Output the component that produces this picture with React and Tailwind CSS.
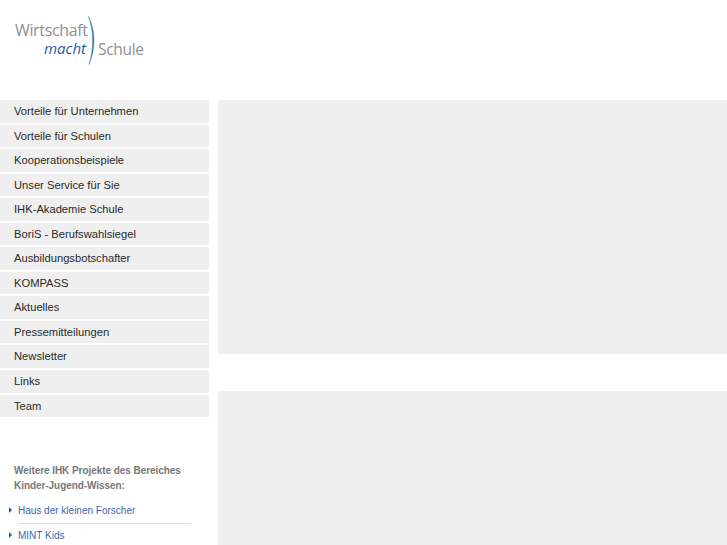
const menu = [
  'Vorteile für Unternehmen',
  'Vorteile für Schulen',
  'Kooperationsbeispiele',
  'Unser Service für Sie',
  'IHK-Akademie Schule',
  'BoriS - Berufswahlsiegel',
  'Ausbildungsbotschafter',
  'KOMPASS',
  'Aktuelles',
  'Pressemitteilungen',
  'Newsletter',
  'Links',
  'Team',
];

function Logo() {
  return (
    <div className="flex items-end w-[130px] h-[52px] ml-[15px] font-['Open_Sans',sans-serif] text-[#8e9093]">
      <div className="flex flex-col w-[73px] pr-[2px] pb-[9px]">
        <span className="text-[16px] leading-[18px] tracking-[-0.35px]">Wirtschaft</span>
        <span className="self-end text-[15px] leading-[19px] italic font-medium text-[#1f5a9e]">macht</span>
      </div>
      <svg className="shrink-0" width="10" height="52" viewBox="0 0 10 52" fill="none">
        <path d="M0.4 1.5C7.8 16 7.8 34 0.9 49.5C6 34 6 16 0.4 1.5Z" fill="#2f6fae" stroke="#2f6fae" strokeWidth="0.4" />
      </svg>
      <span className="pb-[8px] text-[15.5px] leading-[19px] tracking-[-0.3px]">Schule</span>
    </div>
  );
}

function ProjectLink({ children }) {
  return (
    <li className="flex items-center gap-[6px] pl-[9px]">
      <span className="shrink-0 border-y-[3px] border-l-[3px] border-y-transparent border-l-[#1f5a9e]" />
      {children}
    </li>
  );
}

export default function App() {
  return (
    <div className="h-[545px] w-[727px] overflow-hidden bg-white font-['Liberation_Sans',sans-serif]">
      <div className="h-[100px] pt-[15px]">
        <Logo />
      </div>
      <div className="flex gap-[9px]">
        <div className="w-[209px] shrink-0">
          <div className="flex flex-col gap-[2px]">
            {menu.map((item) => (
              <div key={item} className="h-[22.55px] bg-[#efefef] pl-[14px] text-[11.2px] leading-[23.5px] text-[#2a2a2a]">
                {item}
              </div>
            ))}
          </div>
          <div className="mt-[45.5px] pl-[14px] text-[10px] tracking-[-0.06px] leading-[15px] font-bold text-[#777777] whitespace-nowrap">
            Weitere IHK Projekte des Bereiches
            <br />
            Kinder-Jugend-Wissen:
          </div>
          <ul className="mt-[10px] flex flex-col mr-[18px] text-[10px] leading-[15px] text-[#3a68b0]">
            <ProjectLink>Haus der kleinen Forscher</ProjectLink>
            <li className="ml-[18px] mt-[5px] mb-[4px] h-px bg-[#dddddd]" />
            <ProjectLink>MINT Kids</ProjectLink>
          </ul>
        </div>
        <div className="flex-1">
          <div className="h-[254px] bg-[#efefef]" />
          <div className="mt-[37px] h-[154px] bg-[#efefef]" />
        </div>
      </div>
    </div>
  );
}
